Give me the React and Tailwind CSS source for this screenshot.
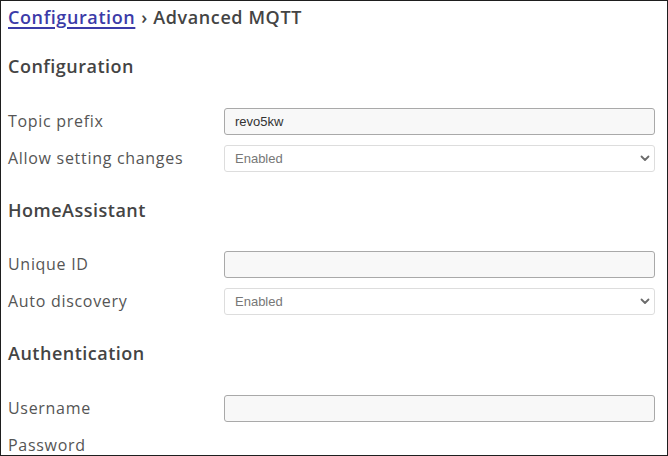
import React from "react";

function Chevron() {
  return (
    <svg width="10" height="7" viewBox="0 0 10 7" className="shrink-0">
      <path d="M1.5 1.5 L5 5 L8.5 1.5" fill="none" stroke="#6b6b6b" strokeWidth="1.8" strokeLinecap="round" strokeLinejoin="round" />
    </svg>
  );
}

function Label({ children }) {
  return <div className="w-[216px] pb-[2px] text-[16px] tracking-[0.7px] text-[#555]">{children}</div>;
}

function TextRow({ label, value }) {
  return (
    <div className="flex h-[37px] items-center">
      <Label>{label}</Label>
      <div className="flex h-[27px] w-[431px] items-center rounded-[3px] border border-[#a9a9a9] bg-[#f8f8f8] px-[10px] font-['Liberation_Sans',Arial,sans-serif] text-[13px] text-[#333]">
        {value}
      </div>
    </div>
  );
}

function SelectRow({ label, value }) {
  return (
    <div className="flex h-[37px] items-center">
      <Label>{label}</Label>
      <div className="flex h-[27px] w-[431px] items-center justify-between rounded-[3px] border border-[#dddddd] bg-white pl-[10px] pr-[4px] font-['Liberation_Sans',Arial,sans-serif] text-[13px] text-[#777]">
        <span>{value}</span>
        <Chevron />
      </div>
    </div>
  );
}

function Heading({ children, h }) {
  return (
    <div className={`flex items-start pt-[20px] ${h}`}>
      <h2 className="text-[18px] leading-[27px] font-semibold tracking-[0.5px] text-[#444]">{children}</h2>
    </div>
  );
}

export default function App() {
  return (
    <div className="h-[456px] w-[668px] overflow-hidden border border-[#1e1e1e] bg-white pl-[7px] font-['Open_Sans',sans-serif]">
      <div className="flex h-[32px] items-center text-[18px] font-semibold tracking-[0.6px] text-[#444]">
        <a href="#" className="text-[#3b3ba8] underline decoration-[1.5px] underline-offset-[3px]">Configuration</a>
        <span className="ml-[6px]">› Advanced MQTT</span>
      </div>
      <Heading h="h-[70px]">Configuration</Heading>
      <TextRow label="Topic prefix" value="revo5kw" />
      <SelectRow label="Allow setting changes" value="Enabled" />
      <Heading h="h-[69px]">HomeAssistant</Heading>
      <TextRow label="Unique ID" value="" />
      <SelectRow label="Auto discovery" value="Enabled" />
      <Heading h="h-[70px]">Authentication</Heading>
      <TextRow label="Username" value="" />
      <div className="flex h-[37px] items-center">
        <Label>Password</Label>
      </div>
    </div>
  );
}
